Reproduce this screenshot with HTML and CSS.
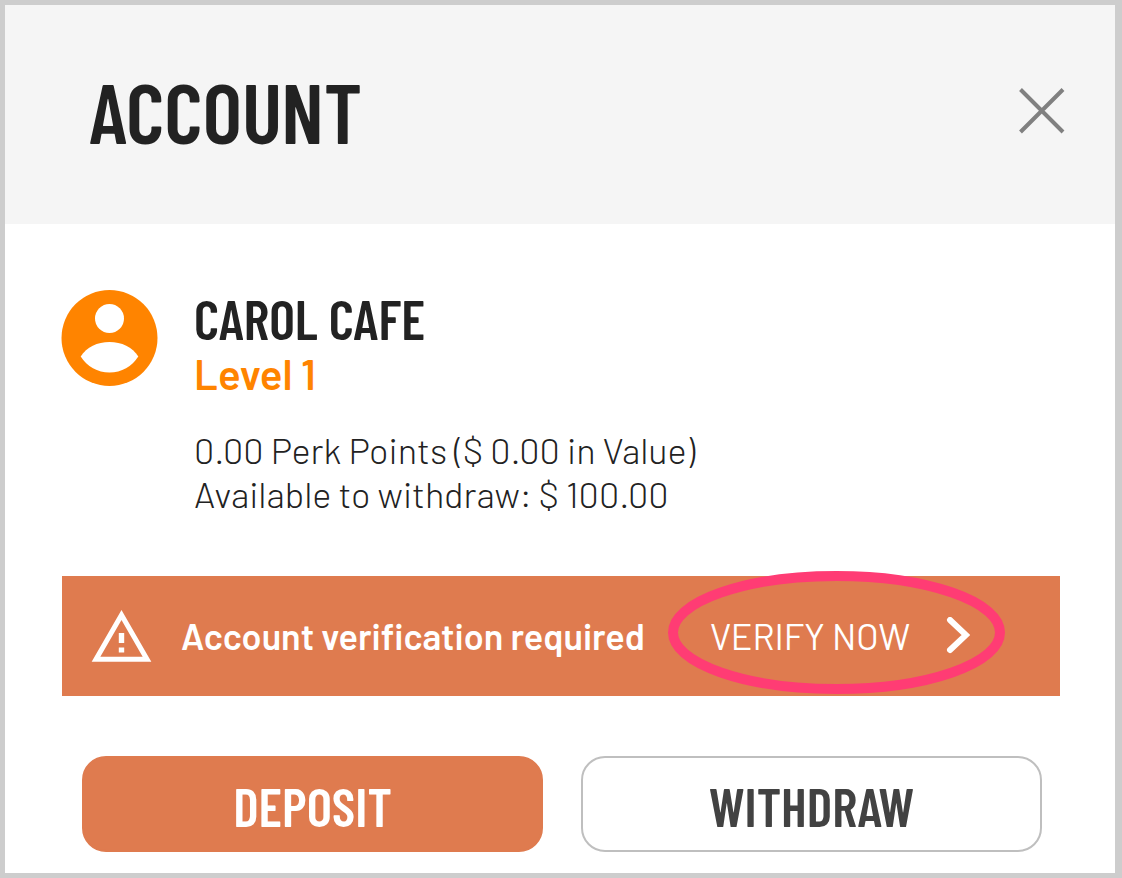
FILE: index.html
```html
<!DOCTYPE html>
<html lang="en">
<head>
<meta charset="utf-8">
<meta name="viewport" content="width=device-width, initial-scale=1">
<title>Account</title>
<link rel="stylesheet" href="styles.css">
</head>
<body>
<main class="panel">
  <header class="panel-header">
    <h1 class="title">ACCOUNT</h1>
    <button class="close" type="button" aria-label="Close">
      <svg viewBox="0 0 46 46" width="46" height="46" aria-hidden="true"><path d="M1.500 1.500 44 44M44 1.500 1.500 44" fill="none" stroke="#808080" stroke-width="4"/></svg>
    </button>
  </header>
  <div class="content">
    <section class="profile">
      <svg class="avatar" viewBox="0 0 96 96" aria-hidden="true">
        <circle cx="48" cy="48" r="48" fill="#ff8400"/>
        <circle cx="48" cy="28.500" r="14.500" fill="#fff"/>
        <path d="M19.200 66.500C25 57 36 52 48 52s23 5 28.800 14.500C70.500 76.500 60 82.500 48 82.500S25.500 76.500 19.200 66.500Z" fill="#fff"/>
      </svg>
      <div class="details">
        <h2 class="name">CAROL CAFE</h2>
        <p class="level">Level 1</p>
        <p class="balance">0.00 Perk Points ($ 0.00 in Value)</p>
        <p class="balance">Available to withdraw: $ 100.00</p>
      </div>
    </section>
    <section class="notice">
      <svg class="warning" viewBox="0 0 60 52" aria-hidden="true">
        <path d="M30 5 4.500 49.200h51Z" fill="none" stroke="#fff" stroke-width="5"/>
        <path d="M27.300 23h5.400v10h-5.400zM27.300 37.500h5.400v5h-5.400z" fill="#fff"/>
      </svg>
      <p class="message">Account verification required</p>
      <a class="verify" href="#verify">
        <span>VERIFY NOW</span>
        <svg class="chevron" viewBox="0 0 24 38" aria-hidden="true"><path d="M4 3 20 18 4 33" fill="none" stroke="#fff" stroke-width="6" stroke-linecap="round"/></svg>
        <svg class="highlight" viewBox="0 0 337 123" aria-hidden="true"><ellipse cx="168.500" cy="61.500" rx="163.500" ry="56.500" fill="none" stroke="#ff3c74" stroke-width="10"/></svg>
      </a>
    </section>
    <div class="actions">
      <button class="action primary" type="button">DEPOSIT</button>
      <button class="action secondary" type="button">WITHDRAW</button>
    </div>
  </div>
</main>
</body>
</html>
```
FILE: styles.css
```css
* { box-sizing: border-box; }
body {
  margin: 0;
  min-height: 100vh;
  padding: 5px 7px 5px 5px;
  display: flex;
  background: #cdcdcd;
  color: #222;
  font-family: "Barlow", "Roboto", sans-serif;
}
h1, h2, p { margin: 0; }
.panel { flex: 1; background: #fff; }
.panel-header {
  display: flex;
  justify-content: space-between;
  align-items: center;
  padding: 50px 50px 57px 84px;
  background: #f5f5f5;
}
.title, .name, .action {
  font-family: "Barlow Condensed", "Roboto Condensed", "Liberation Sans Narrow", sans-serif;
}
.title { font-size: 84px; line-height: 112px; font-weight: 600; }
.close { display: flex; padding: 0; border: 0; background: none; }
.content { padding: 66px 55px 21px 56px; }
.profile { display: flex; gap: 36px; }
.avatar { width: 97px; height: 96px; flex: none; }
.name { font-size: 55px; line-height: 56px; font-weight: 600; }
.level { margin-bottom: 28px; font-size: 42px; line-height: 54px; font-weight: 600; color: #ff8400; }
.balance { font-size: 36px; line-height: 44px; font-weight: 300; }
.notice {
  display: flex;
  align-items: center;
  margin: 60px 0 0 1px;
  padding: 0 90px 0 29px;
  min-height: 120px;
  background: #df7b4f;
  color: #fff;
  font-size: 36px;
  line-height: 44px;
}
.warning { width: 61px; height: 52px; margin-right: 29px; flex: none; }
.message { font-weight: 600; }
.verify {
  position: relative;
  display: flex;
  align-items: center;
  gap: 36px;
  margin-left: auto;
  color: #fff;
  font-weight: 400;
  text-decoration: none;
  white-space: nowrap;
}
.chevron { width: 24px; height: 38px; }
.highlight { position: absolute; top: -43px; right: -35px; width: 337px; height: 123px; }
.actions {
  display: grid;
  grid-template-columns: 1fr 1fr;
  gap: 38px;
  padding: 60px 18px 0 21px;
}
.action {
  height: 96px;
  padding: 3px 0 0;
  border: 2px solid #bfbfbf;
  border-radius: 24px;
  font-size: 54px;
  line-height: 60px;
  font-weight: 600;
}
.primary { border-color: #df7b4f; background: #df7b4f; color: #fff; }
.secondary { background: #fff; color: #424242; }
```
